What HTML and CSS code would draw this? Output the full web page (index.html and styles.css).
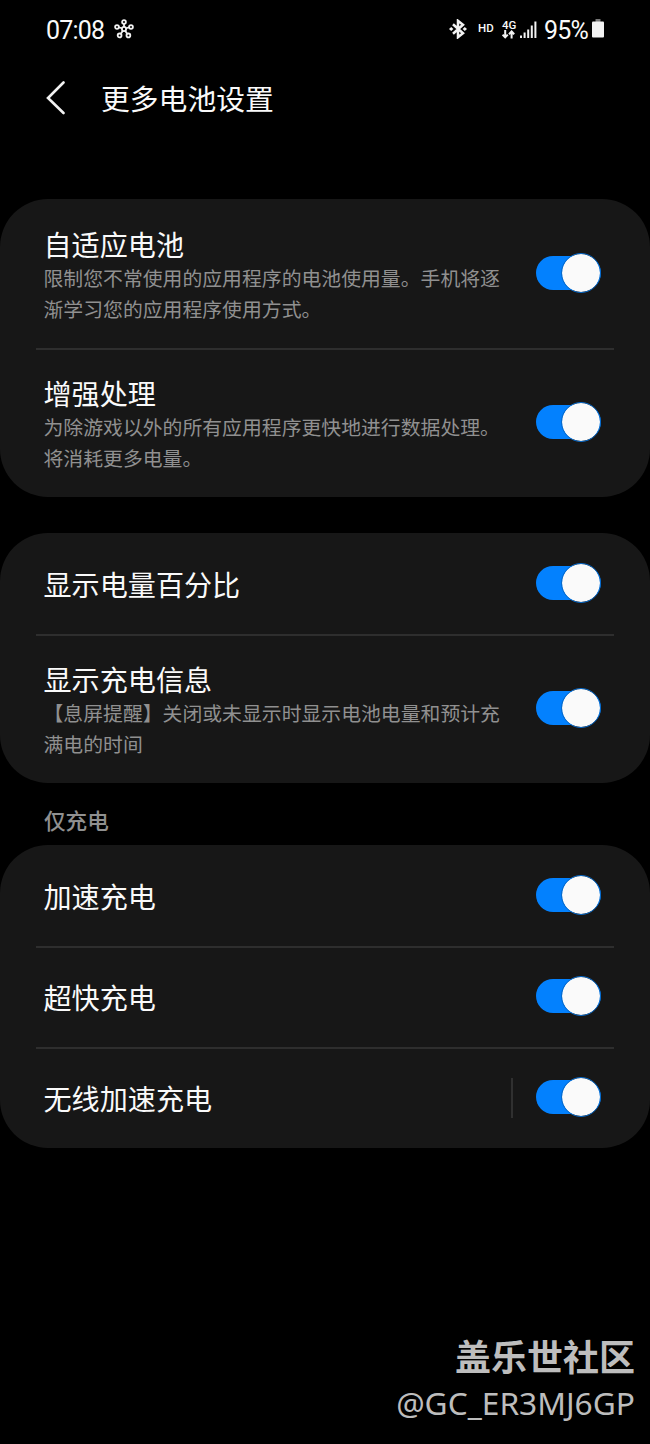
FILE: index.html
```html
<!DOCTYPE html>
<html lang="zh-CN">
  <head>
    <meta charset="UTF-8" />
    <meta name="viewport" content="width=device-width, initial-scale=1.0" />
    <title>更多电池设置</title>
    <link rel="stylesheet" href="styles.css">
  </head>
  <body>
    <div class="status">
      <span class="time">07:08</span>
      <svg class="hub" width="20" height="20" viewBox="0 0 20 20">
        <path d="M10 10V4M10 10L4 8M10 10l6-2M10 10l-4 6M10 10l4 6" />
        <circle cx="10" cy="10" r="2.1" />
        <circle cx="10" cy="3" r="1.9" />
        <circle cx="3" cy="8" r="1.9" />
        <circle cx="17" cy="8" r="1.9" />
        <circle cx="5.6" cy="16.4" r="1.9" />
        <circle cx="14.4" cy="16.4" r="1.9" />
      </svg>
      <svg class="bluetooth" width="18" height="20" viewBox="0 0 18 20">
        <path d="M4 5.2l10 9L9 18.2V1.8l5 4-10 9" />
        <path class="dot" d="M0 10l2.2-2L4.4 10l-2.2 2zM13.6 10l2.2-2L18 10l-2.2 2z" />
      </svg>
      <span class="hd">HD</span>
      <div class="net">
        <span>4G</span>
        <svg width="13" height="9" viewBox="0 0 13 9">
          <path d="M3.2 0v7M.6 4.6l2.6 2.8 2.6-2.8M9.6 8.4v-7M7 4.2l2.6-2.8L12.2 4.2" />
        </svg>
      </div>
      <svg class="signal" width="17" height="17" viewBox="0 0 17 17">
        <path d="M1 17v-2.6M4.6 17v-5.6M8.2 17V8.4M11.8 17V4.6M15.4 17V.4" />
      </svg>
      <span class="percent">95%</span>
      <svg class="cell" width="12" height="19" viewBox="0 0 12 19">
        <rect x="3.5" y="0" width="5" height="3" fill="#777" />
        <rect x="0" y="2.5" width="12" height="16" rx="1" fill="#f2f2f2" />
      </svg>
    </div>

    <div class="header">
      <svg class="back" width="20" height="34" viewBox="0 0 20 34">
        <path d="M17.5 1.5L2 17l15.5 15" />
      </svg>
      <h1>更多电池设置</h1>
    </div>

    <ul class="card">
      <li class="tall">
        <div class="text">
          <h2>自适应电池</h2>
          <p>限制您不常使用的应用程序的电池使用量。手机将逐<br>渐学习您的应用程序使用方式。</p>
        </div>
        <span class="switch"></span>
      </li>
      <li class="tall">
        <div class="text">
          <h2>增强处理</h2>
          <p>为除游戏以外的所有应用程序更快地进行数据处理。<br>将消耗更多电量。</p>
        </div>
        <span class="switch"></span>
      </li>
    </ul>

    <ul class="card display">
      <li>
        <div class="text"><h2>显示电量百分比</h2></div>
        <span class="switch"></span>
      </li>
      <li class="tall">
        <div class="text">
          <h2>显示充电信息</h2>
          <p>【息屏提醒】关闭或未显示时显示电池电量和预计充<br>满电的时间</p>
        </div>
        <span class="switch"></span>
      </li>
    </ul>

    <h3>仅充电</h3>
    <ul class="card">
      <li>
        <div class="text"><h2>加速充电</h2></div>
        <span class="switch"></span>
      </li>
      <li>
        <div class="text"><h2>超快充电</h2></div>
        <span class="switch"></span>
      </li>
      <li>
        <div class="text"><h2>无线加速充电</h2></div>
        <span class="line"></span>
        <span class="switch"></span>
      </li>
    </ul>

    <div class="mark">
      <p class="club">盖乐世社区</p>
      <p class="user">@GC_ER3MJ6GP</p>
    </div>
  </body>
</html>
```
FILE: styles.css
```css
* {
  padding: 0;
  margin: 0;
  box-sizing: border-box;
}
body {
  width: 650px;
  height: 1444px;
  background-color: #000;
  color: #fafafa;
  font-family: "Noto Sans CJK SC", sans-serif;
  overflow: hidden;
}
svg {
  display: block;
  fill: none;
  stroke: #f2f2f2;
}
li {
  list-style: none;
}
h1,
h2 {
  font-weight: 400;
}
/* 状态栏 */
.status {
  display: flex;
  align-items: center;
  height: 58px;
  padding: 0 45px 0 46px;
  font-family: Roboto, sans-serif;
}
.time {
  width: 58px;
  font-size: 25px;
  letter-spacing: -0.8px;
  padding-top: 2px;
}
.hub {
  margin: 0 auto 1px 10px;
  stroke-width: 1.8;
}
.hub circle {
  fill: #000;
}
.bluetooth {
  margin-bottom: 1px;
  stroke-width: 2.5;
}
.bluetooth .dot {
  fill: #f2f2f2;
  stroke: none;
}
.hd {
  width: 16px;
  margin: 0 8px 2px 11px;
  font-size: 11.5px;
  font-weight: 500;
}
.net {
  width: 15px;
  font-size: 11.5px;
  font-weight: 500;
  line-height: 10px;
}
.net svg {
  stroke-width: 2;
}
.signal {
  margin: 0 7px 0 3px;
  stroke-width: 2;
}
.percent {
  width: 44px;
  margin-right: 4px;
  font-size: 25px;
  letter-spacing: -0.8px;
  padding-top: 2px;
}
.cell {
  margin-right: 1px;
  margin-bottom: 1px;
  stroke: none;
}
/* 标题 */
.header {
  display: flex;
  align-items: center;
  height: 80px;
  padding-left: 46px;
  margin-bottom: 61px;
}
.back {
  stroke-width: 2.6;
  stroke-linecap: round;
}
.header h1 {
  margin-left: 35px;
  font-size: 28.8px;
  line-height: 40px;
}
/* 设置卡片 */
.card {
  border-radius: 48px;
  background-color: #171717;
}
.display {
  margin-top: 36px;
}
.card li {
  position: relative;
  display: flex;
  align-items: center;
  height: 101px;
  padding: 0 49px 0 43.5px;
}
.card .tall {
  height: 149px;
}
.card li + li::before {
  content: "";
  position: absolute;
  top: 0;
  left: 36px;
  right: 36px;
  height: 2px;
  background-color: #2e2e2e;
}
.text {
  flex: 1;
  white-space: nowrap;
}
.tall .text {
  padding-top: 4px;
}
.text h2 {
  font-size: 28.1px;
  line-height: 35px;
}
.tall h2 {
  line-height: 33px;
  margin-bottom: 3px;
}
.text p {
  color: #909090;
  font-size: 19.85px;
  line-height: 30.4px;
}
.line {
  width: 2px;
  height: 40px;
  margin-right: 23px;
  background-color: #303030;
}
.switch {
  position: relative;
  width: 65px;
  height: 34px;
  margin-bottom: 1px;
  border-radius: 17px;
  background-color: #0381fe;
}
.switch::after {
  content: "";
  box-sizing: border-box;
  position: absolute;
  top: -3px;
  right: 0;
  width: 40px;
  height: 40px;
  border: 1.5px solid #0869c8;
  border-radius: 50%;
  background-color: #fafafa;
  background-clip: padding-box;
}
h3 {
  padding: 21px 44px 9px;
  color: #909090;
  font-size: 21.6px;
  font-weight: 500;
  line-height: 32px;
}
/* 水印 */
.mark {
  margin-top: 182px;
  padding-right: 15px;
  color: #bdbdbd;
  text-align: right;
}
.club {
  font-size: 36px;
  font-weight: 700;
  line-height: 50px;
}
.user {
  font-family: "Noto Sans", sans-serif;
  font-size: 31.7px;
  line-height: 46px;
}
```
